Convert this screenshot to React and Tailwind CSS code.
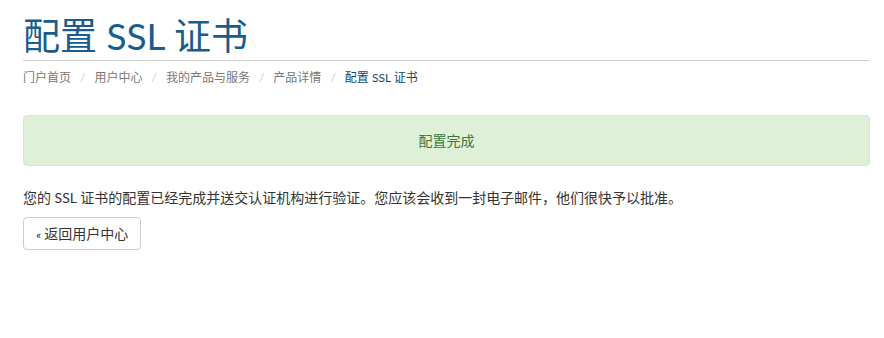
import React from 'react';

const crumbs = ['门户首页', '用户中心', '我的产品与服务', '产品详情'];

export default function App() {
  return (
    <div className="min-h-screen bg-white pl-[23px] pr-[14px] pt-[14px] text-[14px] text-[#333] [font-family:Lato,'Noto_Sans_CJK_SC',sans-serif]">
      <h1 className="text-[37px] leading-[44px] font-normal text-[#1a5d8c] pb-[2px] border-b border-[#cfcfcf]">
        配置 SSL 证书
      </h1>

      <ol className="flex items-center mt-[8px] h-[18px] text-[12px] text-[#777]">
        {crumbs.map((c) => (
          <li key={c} className="flex items-center">
            <span>{c}</span>
            <span className="px-[9px] text-[#ccc]">/</span>
          </li>
        ))}
        <li className="text-[#0d4a75]">配置 SSL 证书</li>
      </ol>

      <div className="mt-[28px] h-[51px] flex items-center justify-center rounded-[4px] border border-[#d6e9c6] bg-[#dff0d8] text-[#3c763d]">
        配置完成
      </div>

      <p className="mt-[22px] leading-[20px]">
        您的 SSL 证书的配置已经完成并送交认证机构进行验证。您应该会收到一封电子邮件，他们很快予以批准。
      </p>

      <button className="mt-[9px] h-[33px] px-[12px] rounded-[4px] border border-[#ccc] bg-white text-[#333] text-[14px]">
        <span className="mr-[3px] text-[12px]">«</span>返回用户中心
      </button>
    </div>
  );
}
